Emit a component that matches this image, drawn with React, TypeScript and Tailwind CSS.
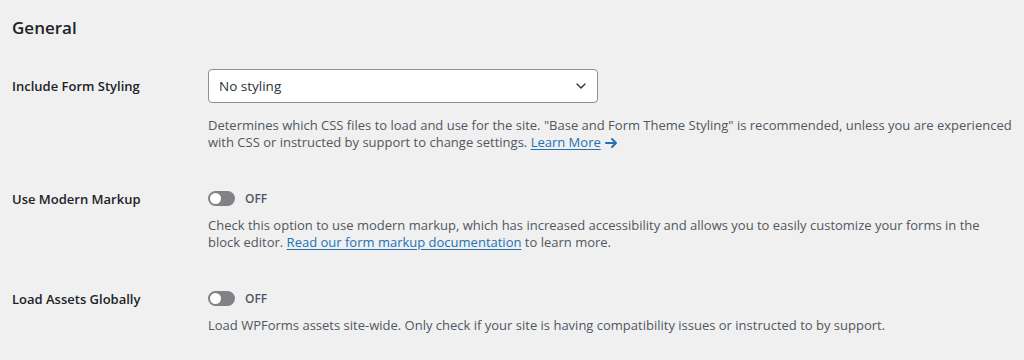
import React from 'react';
import { ChevronDown } from 'lucide-react';

const font = "font-['Open_Sans','Noto_Sans',sans-serif]";

const Toggle: React.FC = () => (
  <div className="flex items-center gap-[10px] h-[17px]">
    <span className="relative inline-flex w-[27px] h-[15px] rounded-full bg-[#808285]">
      <span className="absolute left-[2px] top-[2px] w-[11px] h-[11px] rounded-full bg-white" />
    </span>
    <span className="text-[12px] font-semibold text-[#50575e] leading-[17px]">OFF</span>
  </div>
);

const Arrow: React.FC = () => (
  <svg width="13" height="12" viewBox="0 0 13 12" className="inline-block ml-[4px] -mt-[2px]" fill="none">
    <path d="M1 6h10M7 2l4 4-4 4" stroke="#2271b1" strokeWidth="2" strokeLinecap="round" strokeLinejoin="round" />
  </svg>
);

export default function App() {
  return (
    <div className={`${font} min-h-[360px] w-[1024px] bg-[#f0f0f1] pl-[12px] pt-[16px] text-[#1d2327]`}>
      {/* Section heading */}
      <h2 className="text-[17px] leading-[24px] font-semibold text-[#1d2327]">General</h2>

      {/* Include Form Styling */}
      <div className="grid grid-cols-[196px_1fr] mt-[29px]">
        <div className="text-[13px] font-semibold leading-[34px]">Include Form Styling</div>
        <div>
          <div className="flex items-center justify-between w-[390px] h-[34px] bg-white border border-[#8c8f94] rounded-[4px] pl-[10px] pr-[8px]">
            <span className="text-[13.5px] text-[#2c3338]">No styling</span>
            <ChevronDown size={16} strokeWidth={2} className="text-[#2c3338]" />
          </div>
          <p className="mt-[14px] text-[13px] leading-[17px] text-[#50575e]">
            Determines which CSS files to load and use for the site. "Base and Form Theme Styling" is recommended, unless you are experienced
            <br />
            with CSS or instructed by support to change settings.{' '}
            <a href="#" className="text-[#2271b1] underline underline-offset-2">Learn More</a>
            <Arrow />
          </p>
        </div>
      </div>

      {/* Use Modern Markup */}
      <div className="grid grid-cols-[196px_1fr] mt-[39px]">
        <div className="text-[13px] font-semibold leading-[17px] pt-[1px]">Use Modern Markup</div>
        <div>
          <Toggle />
          <p className="mt-[10px] text-[13px] leading-[17px] text-[#50575e]">
            Check this option to use modern markup, which has increased accessibility and allows you to easily customize your forms in the
            <br />
            block editor.{' '}
            <a href="#" className="text-[#2271b1] underline underline-offset-2">Read our form markup documentation</a> to learn more.
          </p>
        </div>
      </div>

      {/* Load Assets Globally */}
      <div className="grid grid-cols-[196px_1fr] mt-[39px]">
        <div className="text-[13px] font-semibold leading-[17px] pt-[1px]">Load Assets Globally</div>
        <div>
          <Toggle />
          <p className="mt-[10px] text-[13px] leading-[17px] text-[#50575e]">
            Load WPForms assets site-wide. Only check if your site is having compatibility issues or instructed to by support.
          </p>
        </div>
      </div>
    </div>
  );
}
